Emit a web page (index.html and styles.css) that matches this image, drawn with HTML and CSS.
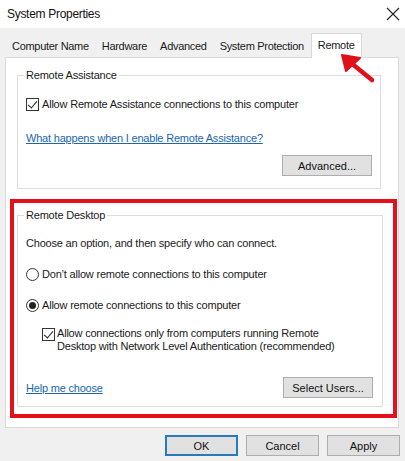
FILE: index.html
```html
<!DOCTYPE html>
<html>

	<head>
		<meta charset="UTF-8">
		<title>System Properties</title>
		<link rel="stylesheet" href="styles.css">
	</head>

	<body>
		<div class="window">
			<div class="titlebar">
				<span class="title">System Properties</span>
				<svg class="close" width="14" height="14" viewBox="0 0 14 14">
					<path d="M1 1L13 13M13 1L1 13" stroke="#222" stroke-width="1.1" fill="none" />
				</svg>
			</div>
			<div class="tabs">
				<span class="tab">Computer Name</span>
				<span class="tab">Hardware</span>
				<span class="tab">Advanced</span>
				<span class="tab">System Protection</span>
				<span class="tab ac">Remote</span>
			</div>
			<div class="panel">
				<fieldset class="group ra">
					<legend>Remote Assistance</legend>
					<label class="check">
						<span class="box on"></span>Allow Remote Assistance connections to this computer
					</label>
					<a href="javascript:;" class="link">What happens when I enable Remote Assistance?</a>
					<div class="btnrow">
						<button class="btn">Advanced...</button>
					</div>
				</fieldset>
				<div class="mark">
					<fieldset class="group rd">
						<legend>Remote Desktop</legend>
						<p class="intro">Choose an option, and then specify who can connect.</p>
						<label class="radio">
							<span class="dot"></span>Don’t allow remote connections to this computer
						</label>
						<label class="radio">
							<span class="dot on"></span>Allow remote connections to this computer
						</label>
						<label class="check nla">
							<span class="box on"></span>
							<span>Allow connections only from computers running Remote<br>Desktop with Network Level Authentication (recommended)</span>
						</label>
						<div class="helprow">
							<a href="javascript:;" class="link">Help me choose</a>
							<button class="btn">Select Users...</button>
						</div>
					</fieldset>
				</div>
			</div>
			<div class="footer">
				<button class="btn wide def">OK</button>
				<button class="btn wide">Cancel</button>
				<button class="btn wide">Apply</button>
			</div>
			<!-- red arrow annotation -->
			<svg class="arrow" width="60" height="45" viewBox="0 0 60 45">
				<path d="M42 35L15 13" stroke="#e0101a" stroke-width="4.5" stroke-linecap="round" fill="none" />
				<path d="M12 10L30 13L16 26Z" fill="#e0101a" stroke="#e0101a" stroke-width="2" stroke-linejoin="round" />
			</svg>
		</div>
	</body>

</html>
```
FILE: styles.css
```css
* {
	margin: 0;
	padding: 0;
	box-sizing: border-box;
}

body {
	background: #f0f0f0;
	font-family: "Liberation Sans", Arial, sans-serif;
	font-size: 11px;
	letter-spacing: -0.2px;
	color: #1a1a1a;
}

.window {
	width: 405px;
	height: 461px;
	position: relative;
	overflow: hidden;
}

.titlebar {
	height: 28px;
	background: #fff;
	display: flex;
	align-items: center;
	justify-content: space-between;
	padding: 0 5px 0 7px;
}

.title {
	font-size: 12px;
	letter-spacing: -0.3px;
	color: #111;
}

.tabs {
	display: flex;
	align-items: flex-end;
	height: 29px;
	padding-left: 7px;
	white-space: nowrap;
	letter-spacing: -0.3px;
}

.tab {
	padding: 0 5px;
	height: 21px;
	line-height: 20px;
	margin-right: 3px;
}

.tab.ac {
	background: #fff;
	height: 25px;
	border: 1px solid #d9d9d9;
	border-bottom: none;
	line-height: 22px;
	padding: 0 6px;
	margin-left: -1px;
	position: relative;
	z-index: 1;
	margin-bottom: -1px;
}

.panel {
	margin: 0 6px 0 5px;
	height: 371px;
	background: #fff;
	border: 1px solid #d9d9d9;
	padding: 9px 0 0 4px;
}

.group {
	border: 1px solid #dcdcdc;
	border-radius: 0;
}

.group legend {
	margin-left: -2px;
	padding: 0 2px;
	line-height: 16px;
}

.ra {
	margin-left: 7px;
	margin-right: 17px;
	height: 122px;
	padding: 0 8px;
}

.check {
	display: flex;
	align-items: center;
	line-height: 16px;
	margin-top: 13px;
}

.box {
	width: 13px;
	height: 13px;
	border: 1px solid #333;
	margin-right: 3px;
	flex-shrink: 0;
	position: relative;
	background: #fff;
}

.box.on::after {
	content: "";
	position: absolute;
	left: 3px;
	top: 0px;
	width: 4px;
	height: 8px;
	border: solid #222;
	border-width: 0 1px 1px 0;
	transform: rotate(40deg);
}

.link {
	display: block;
	color: #1a66b0;
	text-decoration: underline;
	line-height: 16px;
	margin-top: 18px;
}

.btnrow {
	display: flex;
	justify-content: flex-end;
	margin-top: 9px;
}

.btn {
	font: inherit;
	color: #111;
	background: #e1e1e1;
	border: 1px solid #adadad;
	height: 21px;
	padding: 0 14px;
}

.ra .btn {
	width: 90px;
}

.mark {
	margin: 10px 1px 0 0;
	border: 4px solid #e4101c;
	padding: 4px 10px 7px 3px;
}

.rd {
	height: 200px;
	padding: 0 9px 0 8px;
}

.intro {
	margin-top: 12px;
	line-height: 16px;
}

.radio {
	display: flex;
	align-items: center;
	margin-top: 15px;
	line-height: 16px;
}

.dot {
	width: 13px;
	height: 13px;
	border: 1px solid #333;
	border-radius: 50%;
	margin-right: 3px;
	position: relative;
}

.dot.on::after {
	content: "";
	position: absolute;
	left: 2px;
	top: 2px;
	width: 7px;
	height: 7px;
	border-radius: 50%;
	background: #222;
}

.nla {
	align-items: flex-start;
	line-height: 13px;
	margin-top: 14px;
	margin-left: 16px;
}

.nla .box {
	margin-top: 1px;
	margin-right: 2px;
}

.helprow {
	display: flex;
	justify-content: space-between;
	align-items: center;
	margin-top: 24px;
}

.helprow .link {
	margin-top: 0;
}

.helprow .btn {
	width: 90px;
	padding: 0;
}

.footer {
	display: flex;
	justify-content: flex-end;
	gap: 8px;
	padding: 7px 5px 0 0;
}

.btn.wide {
	width: 73px;
	padding: 0;
}

.btn.def {
	border: 2px solid #2a7ab8;
}

.arrow {
	position: absolute;
	left: 330px;
	top: 45px;
	z-index: 5;
}
```
